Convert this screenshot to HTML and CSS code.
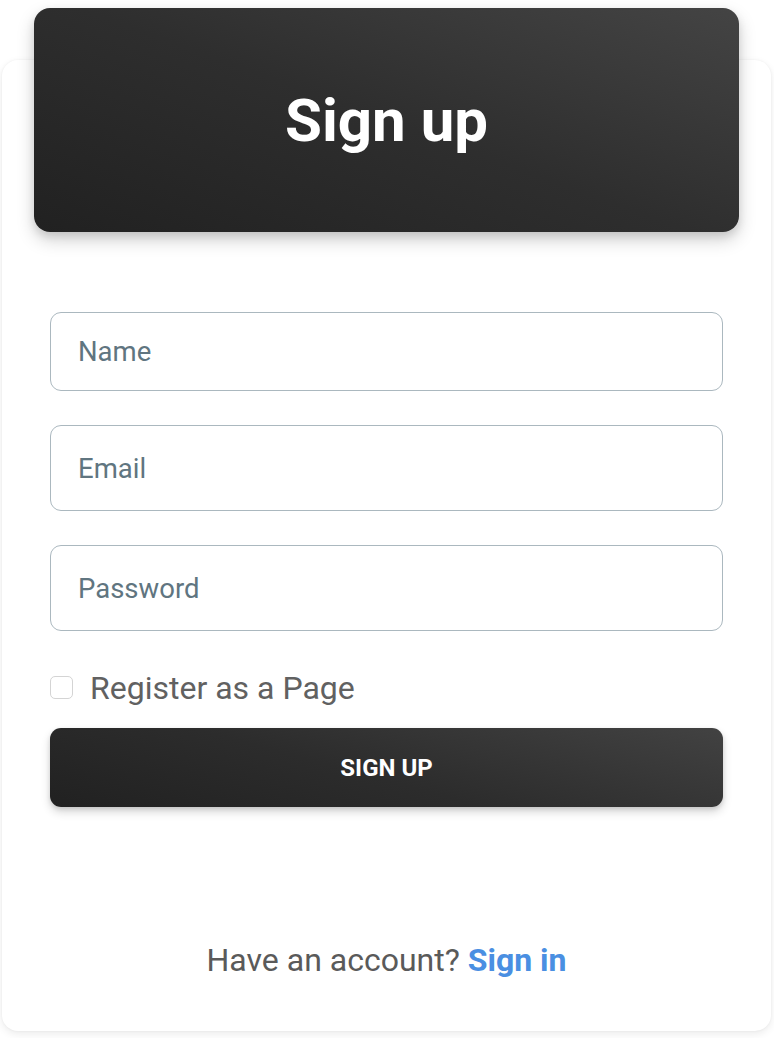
FILE: index.html
```html
<!DOCTYPE html>
<html lang="en">
<head>
<meta charset="utf-8">
<title>Sign up</title>
<link rel="stylesheet" href="styles.css">
</head>
<body>
<div class="page">
  <div class="card">
    <div class="card-header">
      <h1 class="title">Sign up</h1>
    </div>
    <form class="form">
      <input class="field field-name" type="text" placeholder="Name">
      <input class="field field-email" type="email" placeholder="Email">
      <input class="field field-password" type="password" placeholder="Password">
      <label class="check-row">
        <input class="check" type="checkbox">
        <span class="check-label">Register as a Page</span>
      </label>
      <button class="btn" type="button">SIGN UP</button>
    </form>
    <p class="footer">Have an account? <a class="link" href="#">Sign in</a></p>
  </div>
</div>
</body>
</html>
```
FILE: styles.css
```css
* { box-sizing: border-box; }
html, body { margin: 0; padding: 0; background: #fff; }
body { font-family: Roboto, "Liberation Sans", Arial, sans-serif; }

.page {
  padding: 60px 3px 7px 2px;
}

.card {
  background: #fff;
  border-radius: 16px;
  box-shadow: 0 3px 8px rgba(0,0,0,0.08), 0 0 3px rgba(0,0,0,0.05);
  height: 971px;
  display: flex;
  flex-direction: column;
}

.card-header {
  margin: -52px 32px 0 32px;
  height: 224px;
  border-radius: 16px;
  background: linear-gradient(200deg, #444444 0%, #2e2e2e 50%, #212121 100%);
  box-shadow: 0 8px 18px rgba(0,0,0,0.18), 0 4px 8px rgba(0,0,0,0.10);
  display: flex;
  align-items: center;
  justify-content: center;
}

.title {
  margin: 0;
  color: #fff;
  font-size: 60px;
  font-weight: 700;
  line-height: 1;
  position: relative;
  top: 1px;
}

.form {
  display: flex;
  flex-direction: column;
  padding: 80px 48px 0 48px;
}

.field {
  display: block;
  width: 100%;
  border: 1.5px solid #abb8bf;
  border-radius: 11px;
  background: #fff;
  padding: 0 0 0 27px;
  font-family: inherit;
  font-size: 27.5px;
  color: #37474f;
  outline: none;
}
.field::placeholder { color: #607580; opacity: 1; }

.field-name { height: 79px; }
.field-email { height: 86px; margin-top: 34px; }
.field-password { height: 86px; margin-top: 34px; }

.check-row {
  display: flex;
  align-items: center;
  gap: 17px;
  margin-top: 45px;
  height: 23px;
}

.check {
  appearance: none;
  -webkit-appearance: none;
  margin: 0;
  width: 23px;
  height: 23px;
  border: 1px solid #d4d4d4;
  border-radius: 5px;
  background: #fff;
  flex: none;
}

.check-label {
  font-size: 32px;
  color: #616161;
  line-height: 1;
}

.btn {
  margin-top: 29px;
  height: 79px;
  width: 100%;
  border: none;
  border-radius: 11px;
  background: linear-gradient(195deg, #424242 0%, #2c2c2c 55%, #212121 100%);
  box-shadow: 0 5px 10px rgba(0,0,0,0.16), 0 2px 4px rgba(0,0,0,0.10);
  color: #fff;
  font-family: inherit;
  font-size: 24px;
  font-weight: 700;
  cursor: pointer;
}

.footer {
  margin: auto 0 55px 0;
  text-align: center;
  font-size: 32px;
  color: #5a5a5a;
  line-height: 1;
}

.link {
  color: #4a8fe2;
  font-weight: 700;
  text-decoration: none;
}
```
